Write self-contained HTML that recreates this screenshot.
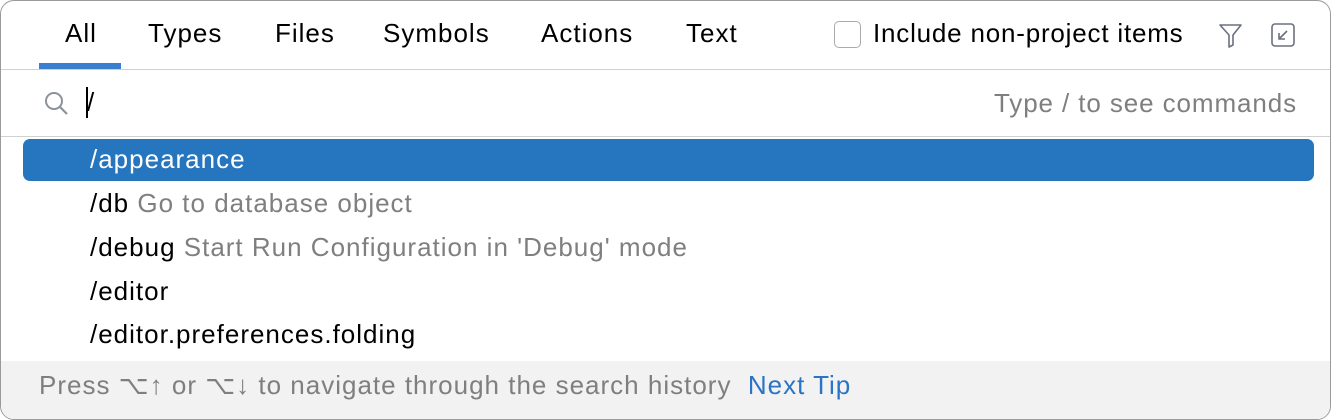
<!DOCTYPE html>
<html><head><meta charset="utf-8"><style>
*{margin:0;padding:0;box-sizing:border-box}
body{width:1338px;height:408px;background:#fff;font-family:"Liberation Sans",sans-serif;font-size:26px;letter-spacing:1px;color:#000;position:relative;overflow:hidden}
.win{position:absolute;left:0;top:0;width:1331px;height:420px;border:1px solid #9a9a9a;border-radius:14px;background:#fff;overflow:hidden}
.t{position:absolute;white-space:nowrap;line-height:30px}
.g{color:#7f7f7f}
</style></head><body>
<div class="win">
<div class="t" style="left:64px;top:17px">All</div>
<div class="t" style="left:147px;top:17px">Types</div>
<div class="t" style="left:274px;top:17px">Files</div>
<div class="t" style="left:382px;top:17px">Symbols</div>
<div class="t" style="left:540px;top:17px">Actions</div>
<div class="t" style="left:685px;top:17px">Text</div>
<div style="position:absolute;left:38px;top:62px;width:82px;height:6px;background:#3a7fcf"></div>
<div style="position:absolute;left:0;top:68px;width:100%;height:1px;background:#d0d0d0"></div>
<div style="position:absolute;left:833px;top:20px;width:27px;height:27px;border:1.5px solid #aaa;border-radius:5px"></div>
<div class="t" style="left:872px;top:17px;letter-spacing:0.8px">Include non-project items</div>
<svg style="position:absolute;left:1216px;top:20px" width="28" height="28" viewBox="0 0 28 28"><path d="M3 4H24L16 14V24L12 26V14Z" fill="none" stroke="#6c707e" stroke-width="1.6" stroke-linejoin="round"/></svg>
<svg style="position:absolute;left:1268px;top:20px" width="28" height="28" viewBox="0 0 28 28"><rect x="3" y="3" width="22" height="22" rx="3" fill="none" stroke="#6c707e" stroke-width="1.6"/><path d="M18 10L10 18M10 12V18H16" fill="none" stroke="#6c707e" stroke-width="1.6"/></svg>
<svg style="position:absolute;left:41px;top:88px" width="28" height="28" viewBox="0 0 28 28"><circle cx="12" cy="12" r="8" fill="none" stroke="#8c9299" stroke-width="2"/><path d="M18 18L25 25" stroke="#8c9299" stroke-width="2.2"/></svg>
<div style="position:absolute;left:85px;top:86px;width:2px;height:31px;background:#000"></div>
<div class="t" style="left:86px;top:86px">/</div>
<div class="t g" style="right:33px;top:87px;letter-spacing:0.9px">Type / to see commands</div>
<div style="position:absolute;left:0;top:135px;width:100%;height:1px;background:#d0d0d0"></div>
<div style="position:absolute;left:22px;top:138px;width:1291px;height:42px;background:#2675bf;border-radius:7px"></div>
<div class="t" style="left:89px;top:143px;color:#fff">/appearance</div>
<div class="t" style="left:89px;top:187px">/db <span class="g">Go to database object</span></div>
<div class="t" style="left:89px;top:231px">/debug <span class="g">Start Run Configuration in 'Debug' mode</span></div>
<div class="t" style="left:89px;top:275px">/editor</div>
<div class="t" style="left:89px;top:318px">/editor.preferences.folding</div>
<div style="position:absolute;left:0;top:360px;width:100%;height:60px;background:#f2f2f2"></div>
<div class="t g" style="left:38px;top:369px">Press ⌥↑ or ⌥↓ to navigate through the search history <span style="color:#2a74c5">&nbsp;Next Tip</span></div>
</div>
</body></html>
